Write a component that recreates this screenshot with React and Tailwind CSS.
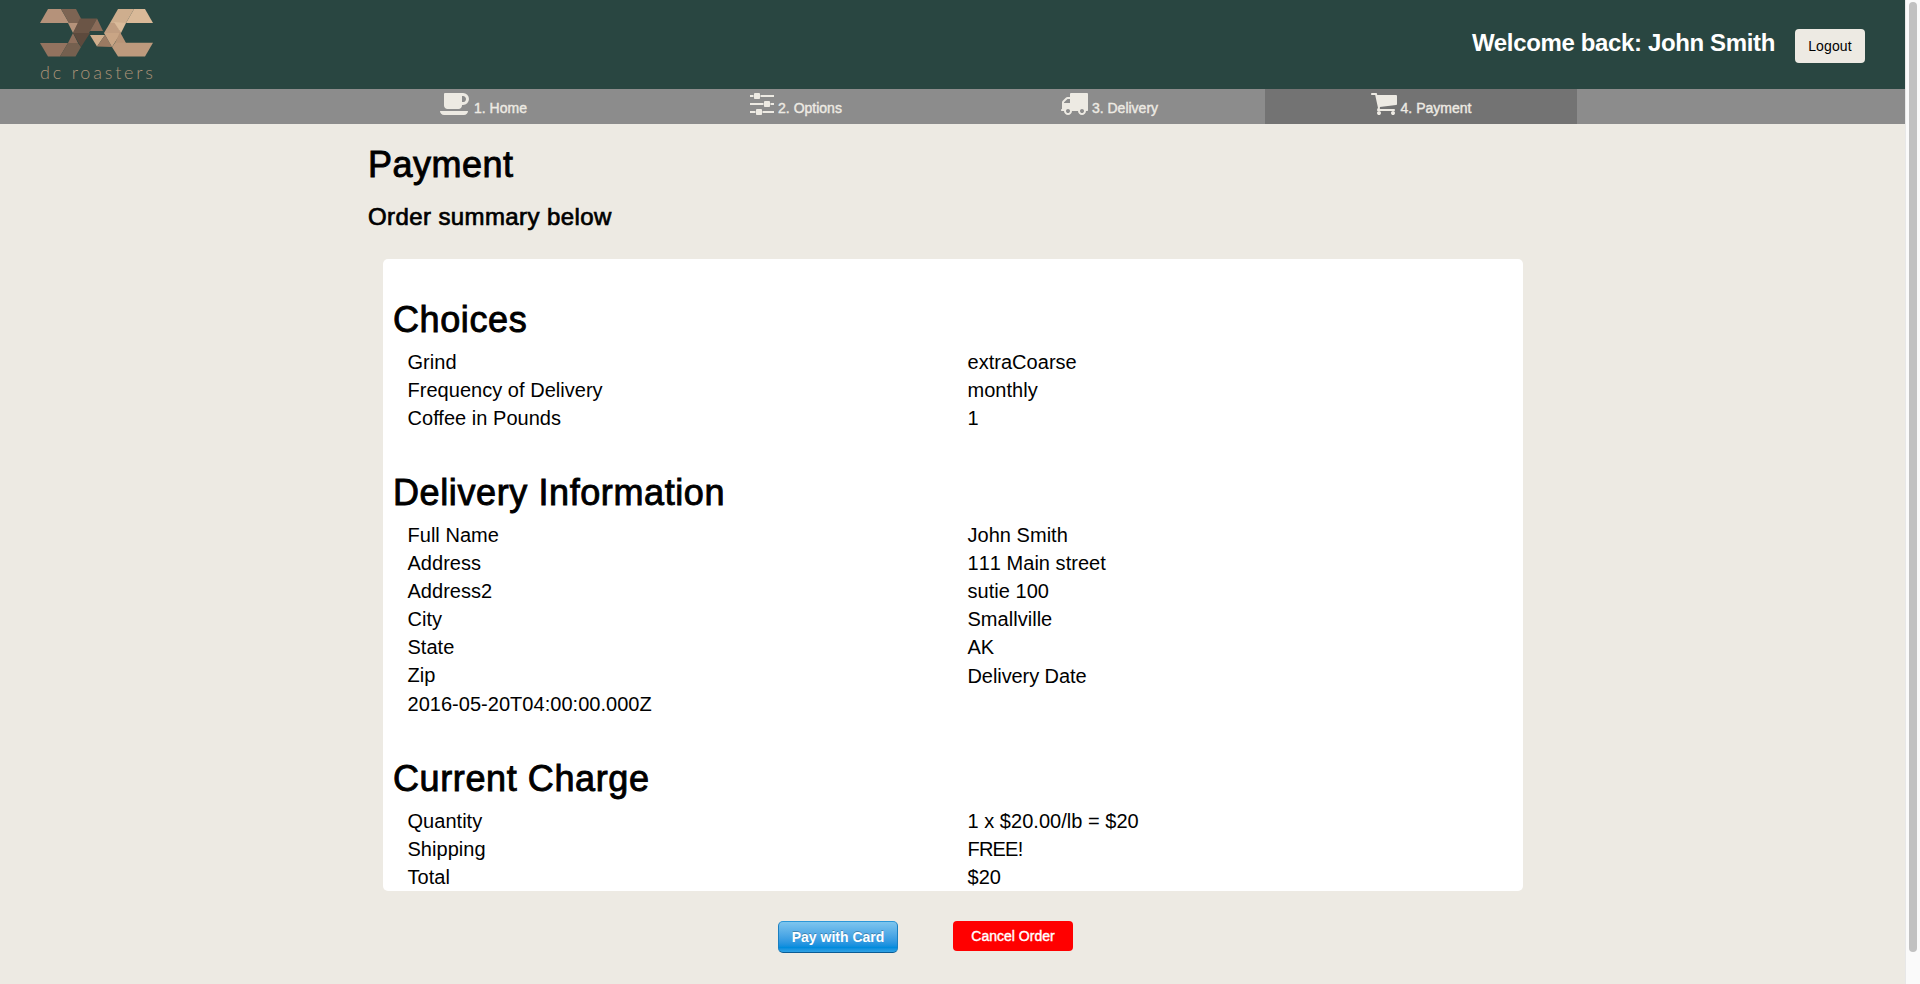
const tabs = [
  {
    label: "1. Home", box: "0 0 1920 1408", size: "w-[30px]", pad: "pr-[3px]",
    d: "M1664 384q0-80-56-136t-136-56h-64v384h64q80 0 136-56t56-136zM0 1152h1792q0 106-75 181t-181 75h-1280q-106 0-181-75t-75-181zM1856 384q0 159-112.5 271.5t-271.5 112.5h-64v32q0 92-66 158t-158 66h-704q-92 0-158-66t-66-158v-736q0-26 19-45t45-19h1152q159 0 271.5 112.5t112.5 271.5z",
  },
  {
    label: "2. Options", box: "128 256 1536 1408", size: "w-[24px]", pad: "pr-[2px]",
    d: "M480 1408v128h-352v-128h352zm352-128q26 0 45 19t19 45v256q0 26-19 45t-45 19h-256q-26 0-45-19t-19-45v-256q0-26 19-45t45-19h256zm160-384v128h-864v-128h864zm-640-512v128h-224v-128h224zm1312 1024v128h-736v-128h736zm-960-1152q26 0 45 19t19 45v256q0 26-19 45t-45 19h-256q-26 0-45-19t-19-45v-256q0-26 19-45t45-19h256zm640 512q26 0 45 19t19 45v256q0 26-19 45t-45 19h-256q-26 0-45-19t-19-45v-256q0-26 19-45t45-19h256zm320 128v128h-224v-128h224zm0-512v128h-864v-128h864z",
  },
  {
    label: "3. Delivery", box: "0 256 1792 1408", size: "w-[28px]",
    d: "M640 1408q0-52-38-90t-90-38-90 38-38 90 38 90 90 38 90-38 38-90zm-384-512h384v-256h-158q-13 0-22 9l-195 195q-9 9-9 22v30zm1280 512q0-52-38-90t-90-38-90 38-38 90 38 90 90 38 90-38 38-90zm256-1088v1024q0 15-4 26.5t-13.5 18.5-16.5 11.5-23.5 6-22.5 2-25.5 0-22.5-.5q0 106-75 181t-181 75-181-75-75-181h-384q0 106-75 181t-181 75-181-75-75-181h-64q-3 0-22.5.5t-25.5 0-22.5-2-23.5-6-16.5-11.5-13.5-18.5-4-26.5q0-26 19-45t45-19v-320q0-8-.5-35t0-38 2.5-34.5 6.5-37 14-30.5 22.5-30l198-198q19-19 50.5-32t58.5-13h160v-192q0-26 19-45t45-19h1024q26 0 45 19t19 45z",
  },
  {
    label: "4. Payment", box: "64 256 1664 1408", size: "w-[26px]", active: true,
    d: "M704 1536q0 52-38 90t-90 38-90-38-38-90 38-90 90-38 90 38 38 90zm896 0q0 52-38 90t-90 38-90-38-38-90 38-90 90-38 90 38 38 90zm128-1088v512q0 24-16.5 42.5t-40.5 21.5l-1044 122q13 60 13 70 0 16-24 64h920q26 0 45 19t19 45-19 45-45 19h-1024q-26 0-45-19t-19-45q0-11 8-31.5t16-36 21.5-40 15.5-29.5l-177-823h-204q-26 0-45-19t-19-45 19-45 45-19h256q16 0 28.5 6.5t19.5 15.5 13 24.5 8 26 5.5 29.5 4.5 26h1201q26 0 45 19t19 45z",
  },
];

const sections = [
  {
    title: "Choices",
    rows: [["Grind", "extraCoarse"], ["Frequency of Delivery", "monthly"], ["Coffee in Pounds", "1"]],
  },
  {
    title: "Delivery Information",
    rows: [
      ["Full Name", "John Smith"],
      ["Address", "111 Main street", "[font-kerning:none]"],
      ["Address2", "sutie 100"],
      ["City", "Smallville"],
      ["State", "AK"],
      ["Zip", "Delivery Date", "pt-px tracking-[-0.08px]"],
      ["2016-05-20T04:00:00.000Z", ""],
    ],
  },
  {
    title: "Current Charge",
    rows: [["Quantity", "1 x $20.00/lb = $20"], ["Shipping", "FREE!", "tracking-[-0.8px]"], ["Total", "$20"]],
  },
];

const medium = "[-webkit-text-stroke:0.9px_currentColor]";

function Logo() {
  return (
    <div className="flex w-[114px] flex-col">
      <svg viewBox="0 0 114 48" className="h-[48px] w-[114px]">
        <polygon points="8,0 21,0 29,14 0,14" fill="#b5927a" />
        <polygon points="21,0 36,0 41,9.5 44,14 37,14 29,14" fill="#7d6453" />
        <polygon points="28,14 40,14 33,24" fill="#b5927a" />
        <polygon points="40,10 44,14 40,24 33,24" fill="#75594b" />
        <polygon points="33,24 28,34 38,34" fill="#8f6f5c" />
        <polygon points="0,34 28,34 20,47.5 8,47.5" fill="#93735f" />
        <polygon points="28,34 38,34 41,38 35.5,47.5 20,47.5" fill="#75604f" />
        <polygon points="33,24 50,24 41,38" fill="#5d4a3d" />
        <polygon points="40,9.5 57,9.5 49,24 33,24" fill="#6b5546" />
        <polygon points="57,9.5 63,22 50,22" fill="#8b6c59" />
        <polygon points="50,26 65,26 57,37.5" fill="#d0ae8d" />
        <polygon points="65,26 72,38 57,37.5" fill="#9b7a62" />
        <polygon points="78,0 94,0 86,14 76,14 70,14" fill="#ceae8e" />
        <polygon points="94,0 105,0 113,14 86,14" fill="#d9b998" />
        <polygon points="70,14 76,14 81,24 64,24" fill="#c09d80" />
        <polygon points="74,13 86,14 81,24" fill="#dabb9a" />
        <polygon points="64,24 81,24 72,38" fill="#c9a585" />
        <polygon points="80,23 86,34 75,34" fill="#b89477" />
        <polygon points="72,38 75,33.8 113,33.8 105,47.5 78,47.5" fill="#bd9a7d" />
      </svg>
      <div className="mt-[4px] whitespace-nowrap font-['Lato',sans-serif] text-[18px] font-light leading-[22px] tracking-[2.8px] text-[#ac9378]">
        dc roasters
      </div>
    </div>
  );
}

export default function App() {
  return (
    <div className="flex h-[984px] overflow-hidden bg-[#edeae3] font-['Liberation_Sans',Arial,sans-serif] text-black">
      <div className="flex w-[1905px] flex-col">
        <header className="flex h-[89px] items-start justify-between bg-[#294641] pl-[40px] pr-[40px] pt-[9px]">
          <Logo />
          <div className="flex">
            <h3 className="mt-[21px] whitespace-nowrap text-[24px] font-bold leading-[26px] tracking-[-0.36px] text-white">
              Welcome back: John Smith
            </h3>
            <button className="ml-[20px] mt-[20px] h-[34px] w-[70px] rounded bg-[#edeae3] text-[14px] tracking-[0.15px]">Logout</button>
          </div>
        </header>

        <nav className="flex h-[35px] bg-[#8c8c8c] pl-[329px] text-[#edeae3]">
          {tabs.map((t) => (
            <a key={t.label} className={`flex w-[312px] justify-center pt-[4px] ${t.pad ?? ""} ${t.active ? "bg-[#737373]" : ""}`}>
              <svg viewBox={t.box} className={`h-[22px] ${t.size}`} fill="currentColor">
                <path d={t.d} />
              </svg>
              <span className="ml-[4px] mt-[7px] text-[14px] leading-[16px] [-webkit-text-stroke:0.4px_currentColor]">{t.label}</span>
            </a>
          ))}
        </nav>

        <main className="flex flex-col pl-[367px] pt-[21px]">
          <h1 className={`pl-px text-[36px] leading-[40px] tracking-[0.5px] ${medium}`}>Payment</h1>
          <h3 className="mt-[19px] pl-px text-[24px] leading-[26px] tracking-[0.4px] [-webkit-text-stroke:0.7px_currentColor]">
            Order summary below
          </h3>
          <section className="ml-[16px] mt-[29px] h-[632px] w-[1140px] rounded-[5px] bg-white pl-[10px]">
            {sections.map((s) => (
              <div key={s.title} className="pt-[41px]">
                <h1 className={`mb-[8px] text-[36px] leading-[40px] tracking-[0.6px] ${medium}`}>{s.title}</h1>
                {s.rows.map(([k, v, extra]) => (
                  <div key={k} className="grid grid-cols-[560px_1fr] pl-[14.5px] text-[20px] leading-[28px] tracking-[0.03px]">
                    <span>{k}</span>
                    <span className={extra}>{v}</span>
                  </div>
                ))}
              </div>
            ))}
          </section>
          <div className="ml-[411px] mt-[30px] flex items-start gap-[55px]">
            <button className="h-[32px] w-[120px] rounded-[5px] border border-b-[#0b5c94] border-l-[#1a7fc0] border-r-[#1a7fc0] border-t-[#2b97d8] bg-gradient-to-b from-[#7dc5ee] via-[#008cdd] via-85% to-[#30a2e4] text-[14px] font-bold text-white [text-shadow:0_-1px_0_rgba(0,0,0,0.25)]">
              Pay with Card
            </button>
            <button className="h-[30px] w-[120px] rounded bg-[#ff0000] text-[14px] text-white [-webkit-text-stroke:0.4px_currentColor]">
              Cancel Order
            </button>
          </div>
        </main>
      </div>

      <div className="flex w-[15px] justify-center border-l border-[#e8e8e8] bg-[#fafafa] pt-[2px]">
        <div className="h-[950px] w-[8px] rounded-full bg-[#c1c1c1]" />
      </div>
    </div>
  );
}
